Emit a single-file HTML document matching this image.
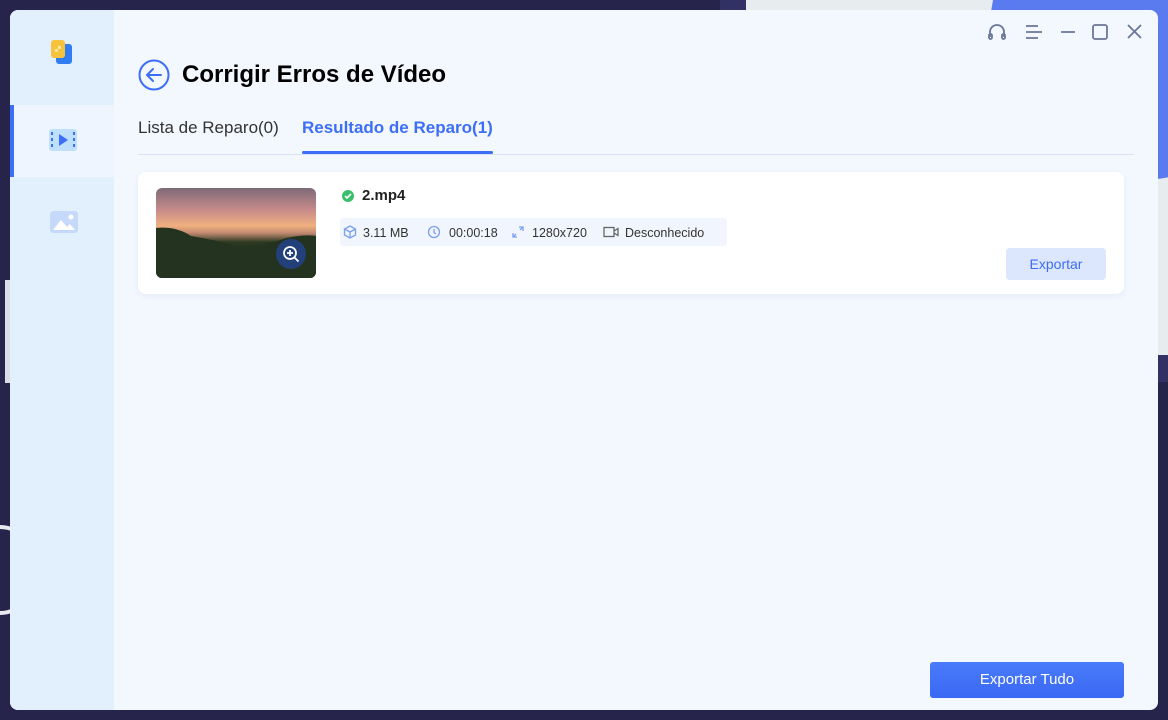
<!DOCTYPE html>
<html><head><meta charset="utf-8"><style>
*{margin:0;padding:0;box-sizing:border-box}
body{width:1168px;height:720px;overflow:hidden;background:#26244a;font-family:"Liberation Sans","DejaVu Sans",sans-serif;position:relative}
.abs{position:absolute}
.win{left:10px;top:10px;width:1148px;height:700px;border-radius:8px;background:#f3f7fe;overflow:hidden}
.side{left:0;top:0;width:104px;height:700px;background:#e2f0fe}
.sel{left:0;top:95px;width:104px;height:72px;background:#eef5fe;border-left:4px solid #3d6ef7}
.t{color:#000}
.m{position:absolute;top:216px;font-size:12.5px;color:#333;white-space:nowrap}
</style></head><body>
<div class="abs" style="left:720px;top:0;width:448px;height:382px;background:#323163"></div>
<div class="abs" style="left:746px;top:0;width:422px;height:355px;background:#e7ecef"></div>
<div class="abs" style="left:990px;top:-120px;width:300px;height:300px;border-radius:50%;background:#5a7af0"></div>
<div class="abs" style="left:5px;top:280px;width:5px;height:103px;background:#dcdce4"></div>
<div class="abs" style="left:-40px;top:525px;width:80px;height:90px;border-radius:50%;border:4px solid #e8e8ee"></div>
<div class="abs win">
 <div class="abs side"></div>
 <div class="abs sel"></div>
 <svg class="abs" style="left:40px;top:29px" width="24" height="26"><rect x="6" y="5" width="16" height="20" rx="3" fill="#2f7cf3"/><rect x="1" y="1" width="14" height="18" rx="3" fill="#f8c33c"/><path d="M5 10h3v-3h3v3h-3v3h-3z" fill="#fde9a4"/></svg>
 <svg class="abs" style="left:38px;top:118px" width="30" height="24"><rect x="1" y="1" width="28" height="22" rx="3" fill="#bfe0fc"/><path d="M11 6l9 6-9 6z" fill="#3d6ef7"/><g fill="#3d6ef7"><rect x="3" y="4" width="2" height="3"/><rect x="3" y="10" width="2" height="3"/><rect x="3" y="16" width="2" height="3"/><rect x="25" y="4" width="2" height="3"/><rect x="25" y="10" width="2" height="3"/><rect x="25" y="16" width="2" height="3"/></g></svg>
 <svg class="abs" style="left:40px;top:201px" width="28" height="23"><rect x="0" y="0" width="28" height="22" rx="3" fill="#c6d9fb"/><path d="M3 19l8-10 6 7 3-3 5 6z" fill="#fff"/><circle cx="21" cy="6" r="2.5" fill="#fff"/></svg>
 <svg class="abs" style="left:128px;top:49px" width="32" height="32"><circle cx="16" cy="16" r="14.5" fill="none" stroke="#3d6ef7" stroke-width="2"/><path d="M23 16H9M15 10l-6 6 6 6" fill="none" stroke="#3d6ef7" stroke-width="2" stroke-linecap="round" stroke-linejoin="round"/></svg>
 <div class="abs t" style="left:172px;top:51px;font-size:24px;font-weight:bold">Corrigir Erros de Vídeo</div>
 <div class="abs" style="left:128px;top:108px;font-size:17px;color:#333">Lista de Reparo(0)</div>
 <div class="abs" style="left:292px;top:108px;font-size:17px;color:#3d6ef7;font-weight:bold">Resultado de Reparo(1)</div>
 <div class="abs" style="left:128px;top:144px;width:996px;height:1px;background:#d9e3f5"></div>
 <div class="abs" style="left:292px;top:141px;width:191px;height:3px;background:#3d6ef7;border-radius:2px"></div>
 <svg class="abs" style="left:976px;top:12px" width="160" height="20" fill="none" stroke="#6a7698" stroke-width="1.8"><path d="M4 15v-5a7 7 0 0 1 14 0v5"/><rect x="3" y="12" width="3" height="5" rx="1.5"/><rect x="16" y="12" width="3" height="5" rx="1.5"/><path d="M40 4h12M40 10h16M40 16h12M75 10h14"/><rect x="107" y="3" width="14" height="14" rx="2"/><path d="M142 3l13 13M155 3l-13 13"/></svg>
 <div class="abs" style="left:128px;top:162px;width:986px;height:122px;background:#fff;border-radius:8px;box-shadow:0 2px 6px rgba(80,110,180,.08)"></div>
 <div class="abs" style="left:146px;top:178px;width:160px;height:90px;border-radius:6px;overflow:hidden;background:linear-gradient(180deg,#7d6a78 0%,#c98c8a 25%,#f0b080 42%,#c08a70 50%,#2e3a22 60%,#1e2a18 80%,#111510 100%)">
  <svg width="160" height="90" style="position:absolute;left:0;top:0"><path d="M0 40 Q20 38 35 48 Q60 52 80 58 Q110 58 130 50 Q150 46 160 48 V90 H0z" fill="#243220"/></svg>
 </div>
 <div class="abs" style="left:266px;top:229px;width:30px;height:30px;border-radius:50%;background:#22407a"></div>
 <svg class="abs" style="left:272px;top:235px" width="18" height="18" fill="none" stroke="#fff" stroke-width="1.8"><circle cx="8" cy="8" r="6"/><path d="M12.5 12.5l4 4M8 5v6M5 8h6"/></svg>
 <svg class="abs" style="left:331px;top:179px" width="14" height="14"><circle cx="7" cy="7" r="6" fill="#3cbf6a"/><path d="M4 7l2 2 4-4" fill="none" stroke="#fff" stroke-width="1.6"/></svg>
 <div class="abs t" style="left:352px;top:177px;font-size:15px;font-weight:bold;color:#222">2.mp4</div>
 <div class="abs" style="left:330px;top:208px;width:387px;height:28px;background:#f1f5fd;border-radius:3px"></div>
 <svg class="abs" style="left:333px;top:215px" width="14" height="14" fill="none" stroke="#7aa0f0" stroke-width="1.3"><path d="M7 1l5.5 3v6L7 13 1.5 10V4z M1.5 4L7 7l5.5-3M7 7v6"/></svg>
 <div class="m" style="left:353px">3.11 MB</div>
 <svg class="abs" style="left:417px;top:215px" width="14" height="14" fill="none" stroke="#7aa0f0" stroke-width="1.3"><circle cx="7" cy="7" r="5.5"/><path d="M7 4v3.5l2 1.5"/></svg>
 <div class="m" style="left:439px">00:00:18</div>
 <svg class="abs" style="left:501px;top:215px" width="14" height="14" fill="none" stroke="#7aa0f0" stroke-width="1.3"><path d="M8 2h4v4M6 12H2V8M12 2L9 5M2 12l3-3"/></svg>
 <div class="m" style="left:522px">1280x720</div>
 <svg class="abs" style="left:593px;top:215px" width="16" height="14" fill="none" stroke="#666" stroke-width="1.3"><rect x="1" y="2.5" width="10" height="9"/><path d="M11 6l4-2.5v7L11 8"/></svg>
 <div class="m" style="left:615px">Desconhecido</div>
 <div class="abs" style="left:996px;top:238px;width:100px;height:32px;background:#dce6fd;border-radius:4px;color:#3d6ef7;font-size:14px;text-align:center;line-height:32px">Exportar</div>
 <div class="abs" style="left:920px;top:652px;width:194px;height:36px;background:linear-gradient(#4a7bfa,#3a68f4);border-radius:3px;color:#fff;font-size:15px;text-align:center;line-height:36px">Exportar Tudo</div>
</div>
</body></html>
